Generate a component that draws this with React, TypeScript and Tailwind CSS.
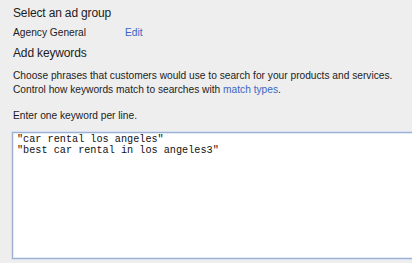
export default function App() {
  const keywords = ['"car rental los angeles"', '"best car rental in los angeles3"'];

  return (
    <div className="w-[412px] h-[263px] overflow-hidden bg-[#eeeeee] pl-[13px] text-[#1c1c1c] font-['Liberation_Sans',Arial,sans-serif]">
      {/* Ad group */}
      <div className="pt-[6px] text-[12px] tracking-[-0.15px] leading-[14px]">Select an ad group</div>
      <div className="mt-[6px] flex text-[10.2px] leading-[14px]">
        <span className="w-[112px]">Agency General</span>
        <span className="text-[#3c66c4]">Edit</span>
      </div>

      {/* Keywords */}
      <div className="mt-[6px] text-[12px] tracking-[-0.15px] leading-[14px]">Add keywords</div>
      <p className="mt-[8.5px] text-[10.2px] leading-[14px]">
        Choose phrases that customers would use to search for your products and services.
        <br />
        Control how keywords match to searches with <span className="text-[#3c66c4]">match types</span>.
      </p>
      <p className="mt-[12px] text-[10.2px] leading-[14px]">Enter one keyword per line.</p>

      <div className="mt-[9.5px] -ml-px w-[420px] h-[127px] bg-white border border-[#9fb0cf] shadow-[0_0_0_1px_#d6e2f3,inset_0_0_0_1px_#e2ebf8] pt-[0.5px] pl-[4px] font-['Liberation_Mono','Courier_New',monospace] text-[10.2px] leading-[11.7px] text-[#111111] whitespace-pre">
        {keywords.map((k) => (
          <div key={k}>{k}</div>
        ))}
      </div>
    </div>
  );
}
